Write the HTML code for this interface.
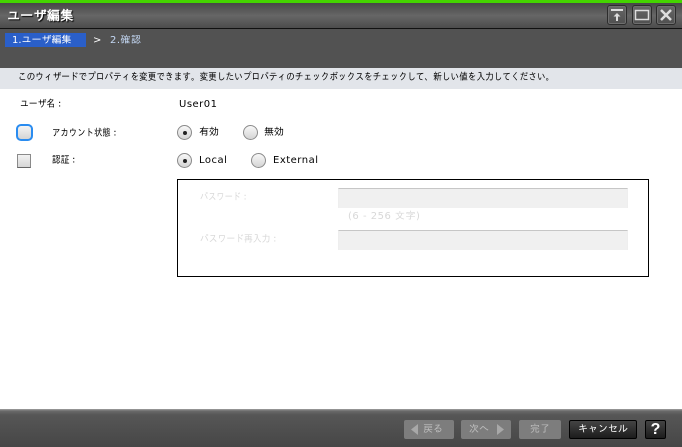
<!DOCTYPE html>
<html lang="ja"><head><meta charset="utf-8"><style>
html,body{margin:0;padding:0;background:#fff}
#p{position:relative;width:682px;height:447px;overflow:hidden;background:#fff;font-family:"Liberation Sans","IPAGothic","WenQuanYi Zen Hei",sans-serif;font-size:10px;color:#000}
#p div{position:absolute;white-space:nowrap}
.t{line-height:12px;transform-origin:0 50%}
.d{font-family:"DejaVu Sans","IPAGothic",sans-serif;font-size:10px;letter-spacing:.5px}
.g{color:#d8d8d8}
.in{background:#f0f0f0;border-top:1px solid #c6c6c6;border-left:1px solid #eee;border-right:1px solid #eee;box-sizing:border-box;left:338px;width:290px;height:20px}
.rb{width:13px;height:13px;border-radius:50%;border:1px solid #8a8a8a;background:linear-gradient(#f8f8f8,#d4d4d4)}
.rb i{position:absolute;left:4.500px;top:4.500px;width:4px;height:4px;border-radius:50%;background:#222}
.wb{top:5px;width:20px;height:20px;box-sizing:border-box;border:1px solid #2c2c2c;border-radius:3px;background:linear-gradient(#666,#505050);box-shadow:inset 0 0 0 1px #6e6e6e}
.bb{top:420px;height:19px;box-sizing:border-box;background:#7d7d7d;border-radius:2px;color:#bdbdbd;line-height:19px;text-align:center}
</style></head><body><div id="p">
<div style="left:0;top:0;width:682px;height:3px;background:#44d400"></div>
<div style="left:0;top:3px;width:682px;height:25px;background:linear-gradient(#474747,#666 50%,#4c4c4c)"></div>
<div style="left:0;top:28px;width:682px;height:1px;background:#111"></div>
<div style="left:0;top:29px;width:682px;height:39px;background:#525252"></div>
<div class="t" style="left:7px;top:8px;font-size:13px;line-height:16px;font-weight:bold;color:#fff;text-shadow:1px 1px 1px #000;letter-spacing:.3px">ユーザ編集</div>

<div class="wb" style="left:607px"><svg width="18" height="18" style="position:absolute;left:0;top:0"><path d="M3 3h12v2H3zM8 8h2v7H8zM5.500 10.500L9 7l3.500 3.500z" fill="#ddd"/></svg></div>
<div class="wb" style="left:632px"><svg width="18" height="18" style="position:absolute;left:0;top:0"><rect x="2.500" y="4.500" width="13" height="9" fill="none" stroke="#ddd" stroke-width="1.500"/></svg></div>
<div class="wb" style="left:656px"><svg width="18" height="18" style="position:absolute;left:0;top:0"><path d="M4 4l10 10M14 4L4 14" stroke="#ddd" stroke-width="2.500" fill="none"/></svg></div>

<div style="left:5px;top:33px;width:81px;height:14px;background:#2a5fc9"></div>
<div class="t d" style="left:12px;top:35px;color:#fff;letter-spacing:0">1.ユーザ編集</div>
<div class="t d" style="left:93px;top:35px;color:#fff">&gt;</div>
<div class="t d" style="left:110px;top:35px;color:#c4d8f4">2.確認</div>

<div style="left:0;top:68px;width:682px;height:21px;background:#e2e5ea"></div>
<div class="t" style="left:18px;top:72px;transform:scaleX(.865)">このウィザードでプロパティを変更できます。変更したいプロパティのチェックボックスをチェックして、新しい値を入力してください。</div>

<div class="t" style="left:20px;top:99px;transform:scaleX(.88)">ユーザ名：</div>
<div class="t d" style="left:179px;top:99px">User01</div>

<div style="left:16px;top:124px;width:17px;height:17px;box-sizing:border-box;border:2px solid #2a8cf0;border-radius:5px;background:linear-gradient(#f4f4f4,#d4d4d4)"></div>
<div class="t" style="left:52px;top:128px;transform:scaleX(.84)">アカウント状態：</div>
<div class="rb" style="left:177px;top:125px"><i></i></div>
<div class="t" style="left:199px;top:127px">有効</div>
<div class="rb" style="left:243px;top:125px"></div>
<div class="t" style="left:264px;top:127px">無効</div>

<div style="left:17px;top:154px;width:14px;height:14px;box-sizing:border-box;border:1px solid #8a8a8a;border-bottom-color:#666;background:linear-gradient(#f2f2f2,#d6d6d6)"></div>
<div class="t" style="left:52px;top:155px;transform:scaleX(.87)">認証：</div>
<div class="rb" style="left:177px;top:153px"><i></i></div>
<div class="t d" style="left:199px;top:155px">Local</div>
<div class="rb" style="left:251px;top:153px"></div>
<div class="t d" style="left:273px;top:155px">External</div>

<div style="left:177px;top:179px;width:472px;height:98px;box-sizing:border-box;border:1px solid #000"></div>
<div class="t g" style="left:200px;top:192px;transform:scaleX(.82)">パスワード：</div>
<div class="in" style="top:188px"></div>
<div class="t d g" style="left:348px;top:211px">(6 - 256 文字)</div>
<div class="t g" style="left:200px;top:234px;transform:scaleX(.88)">パスワード再入力：</div>
<div class="in" style="top:230px"></div>

<div style="left:0;top:409px;width:682px;height:38px;background:linear-gradient(#a0a0a0 0,#6a6a6a 2px,#565656 6px,#464646)"></div>
<div class="bb" style="left:404px;width:50px;padding-left:8px;line-height:20px">戻る</div>
<svg width="10" height="12" style="position:absolute;left:411px;top:424px"><path d="M7 0v11L0 5.500z" fill="#a8a8a8"/></svg>
<div class="bb" style="left:461px;width:50px;padding-right:14px;line-height:20px">次へ</div>
<svg width="10" height="12" style="position:absolute;left:497px;top:424px"><path d="M0 0v11l7-5.500z" fill="#a8a8a8"/></svg>
<div class="bb" style="left:519px;width:42px;line-height:20px">完了</div>
<div class="bb" style="left:569px;width:68px;background:linear-gradient(#444,#1c1c1c);border:1px solid #000;color:#fff;line-height:18px">キャンセル</div>
<div class="bb" style="left:645px;width:21px;background:linear-gradient(#444,#1c1c1c);border:1px solid #000;color:#fff;font:bold 16px/17px 'Liberation Sans',sans-serif">?</div>
</div></body></html>
